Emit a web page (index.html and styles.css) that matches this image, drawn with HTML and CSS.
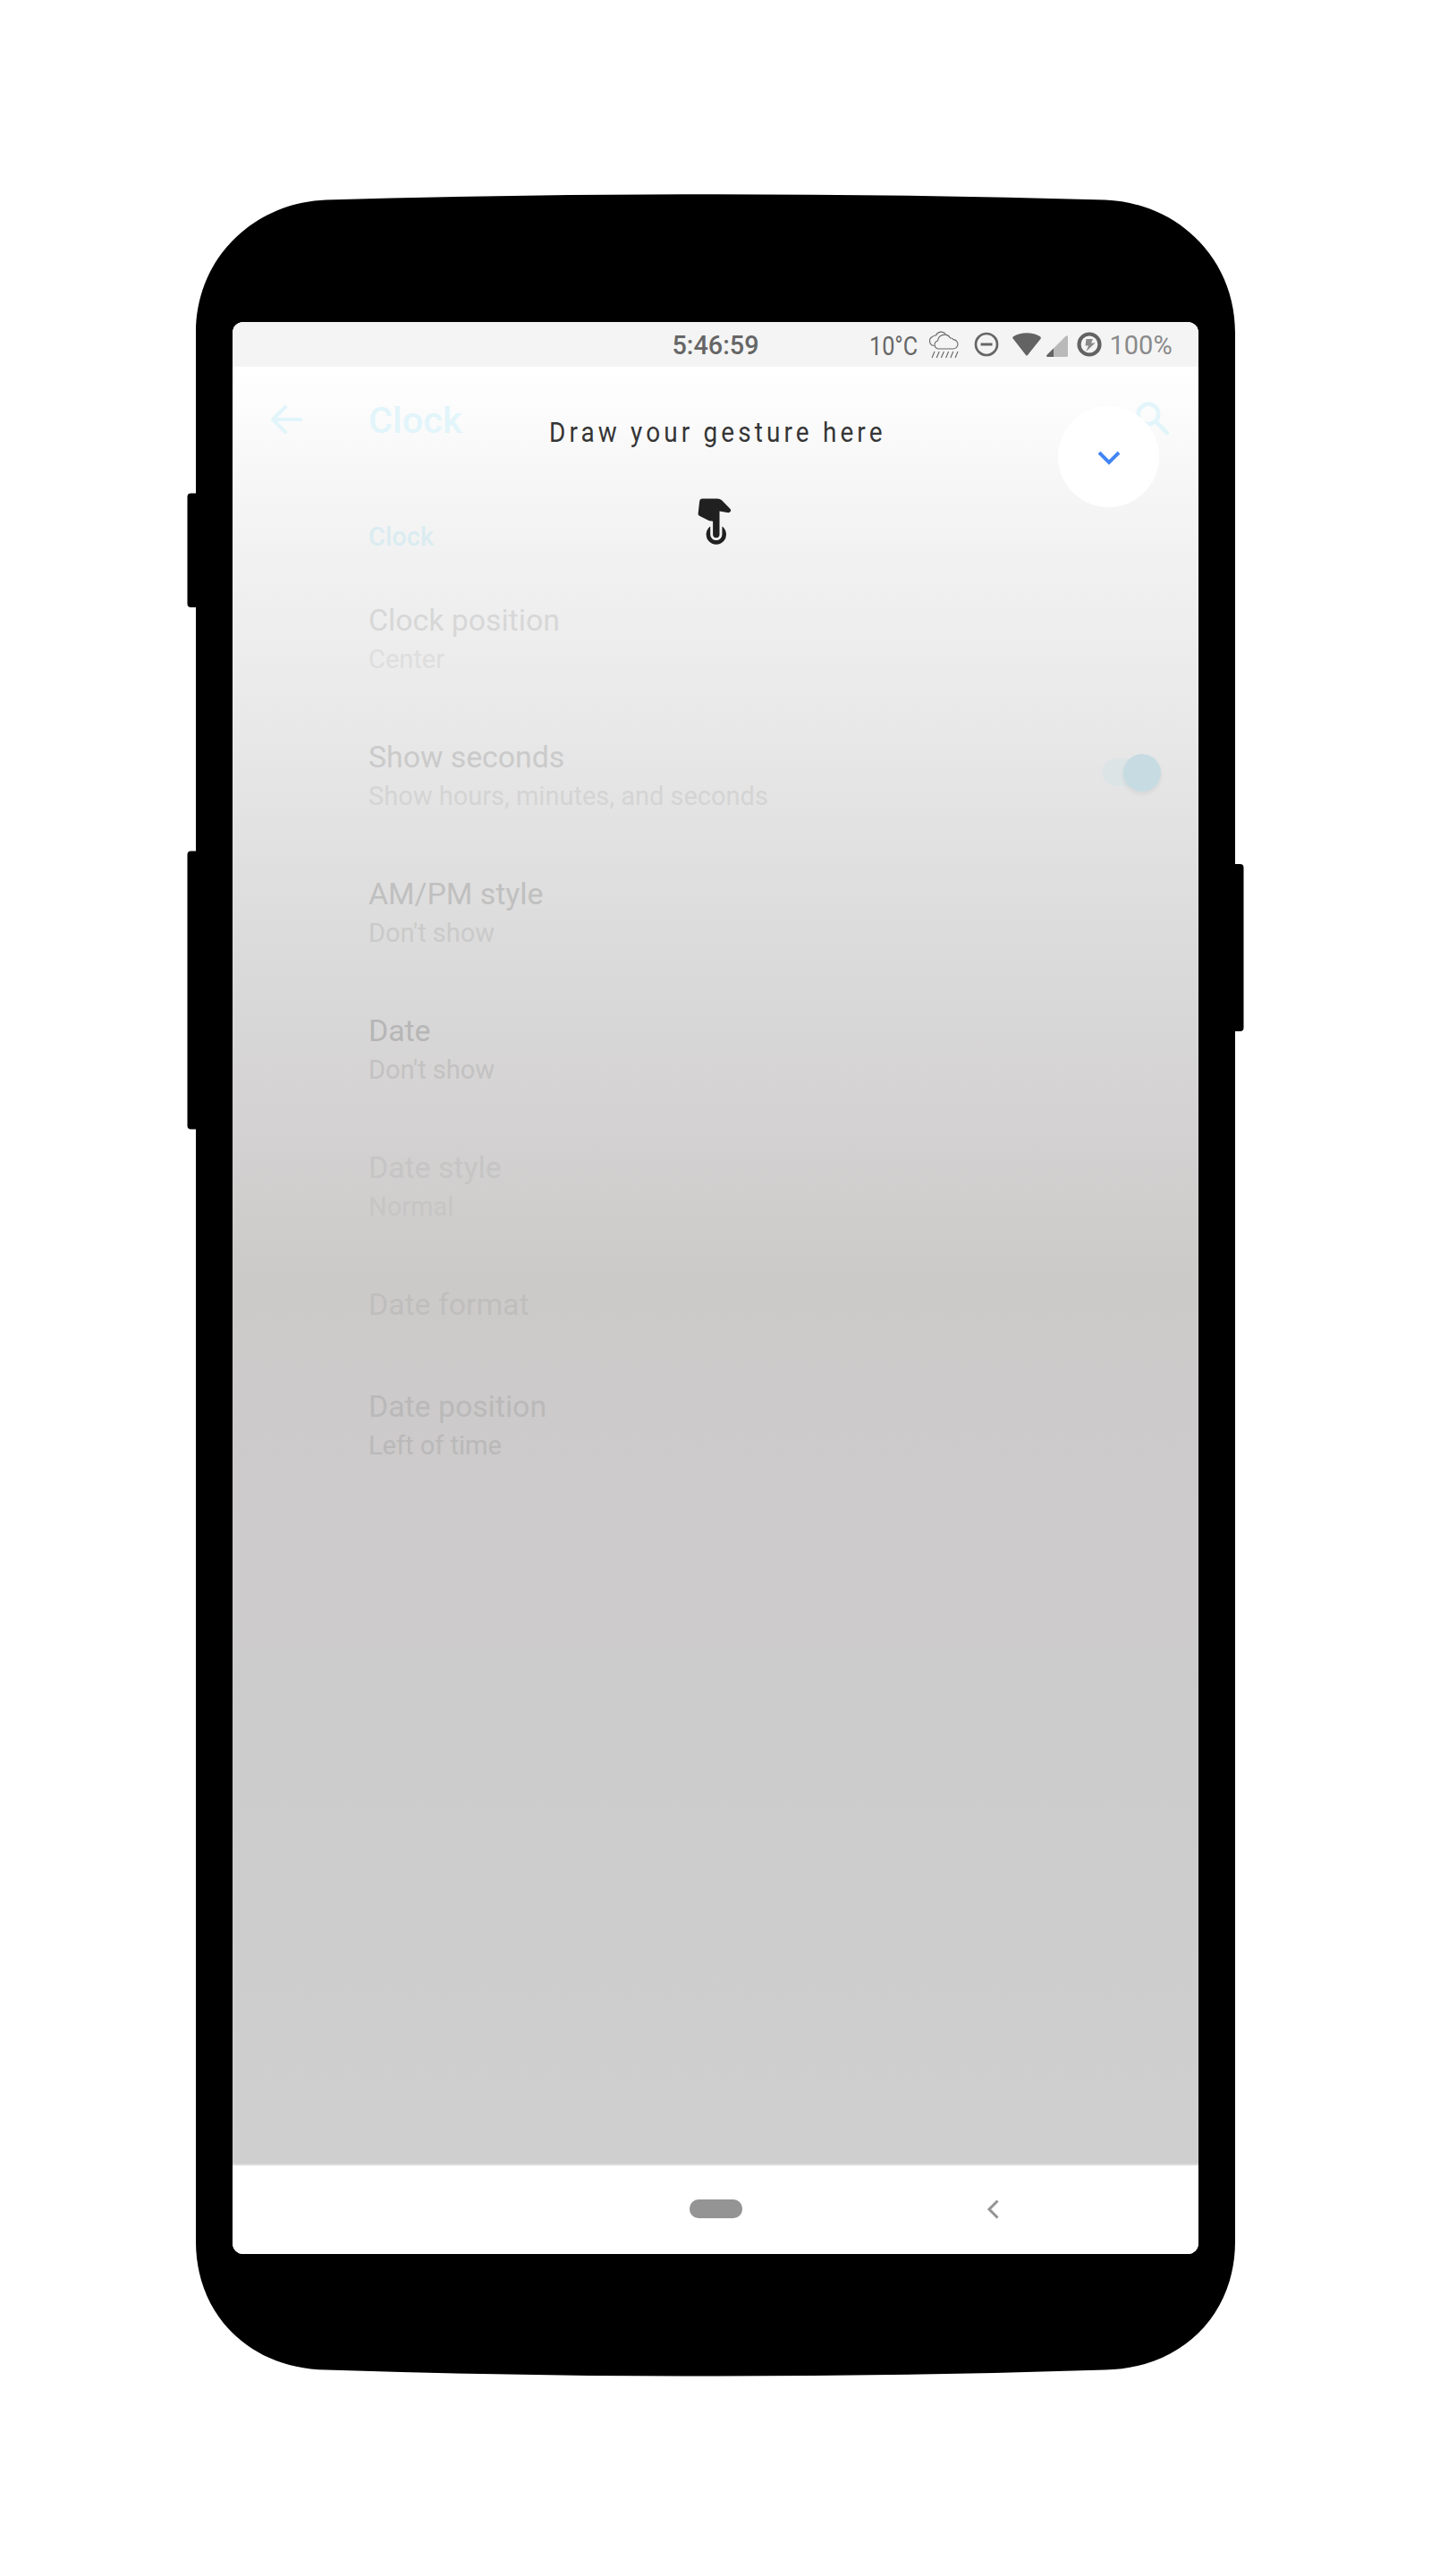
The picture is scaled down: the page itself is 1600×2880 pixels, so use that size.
FILE: index.html
```html
<!DOCTYPE html>
<html lang="en">
<head>
<meta charset="utf-8">
<title>Clock settings</title>
<link rel="stylesheet" href="styles.css">
</head>
<body>
<main class="phone">
  <svg class="phone-shell" viewBox="209 217 1182 2440" width="1182" height="2440" aria-hidden="true">
    <rect x="209.500" y="551.5" width="24" height="127.500" rx="4"/>
    <rect x="209.500" y="951.500" width="24" height="311" rx="4"/>
    <rect x="1367" y="966" width="23.500" height="187" rx="4"/>
    <path d="M219 372C219 289 283 227 364 223.500Q580 217.200 800 217.200T1236 223.500C1317 227 1381 289 1381 372V2506C1381 2589 1320 2648 1236 2649.500Q1020 2656.500 800 2656.500T364 2649.500C280 2648 219 2589 219 2506Z"/>
  </svg>
  <div class="screen">
    <header class="status-bar">
      <span class="status-spacer"></span>
      <span class="status-time">5:46:59</span>
      <div class="status-icons">
        <span class="temperature">10°C</span>
        <svg class="icon-weather" viewBox="0 0 34 32" width="34" height="32" fill="none" stroke="#666" stroke-width="1.100">
          <path d="M12 21H27.500A5.200 5.200 0 0 0 28 10.600A3.500 3.500 0 0 0 24.500 9A7.500 7.500 0 0 0 10.500 12A4.800 4.800 0 0 0 7 16.500A4.600 4.600 0 0 0 12 21Z"/>
          <path d="M6.500 17.500A5.200 5.200 0 0 1 4.500 7.600A4.500 4.500 0 0 1 8.500 6A6.500 6.500 0 0 1 19.500 4.500"/>
          <path d="M7 24L4 31M12.200 24L9.200 31M17.400 24L14.400 31M22.600 24L19.600 31M27.800 24L24.800 31M33 24L30 31"/>
        </svg>
        <svg class="icon-dnd" viewBox="0 0 28 28" width="28" height="28" fill="none" stroke="#666">
          <circle cx="14" cy="14" r="12" stroke-width="2.700"/><path d="M7.500 14H20.500" stroke-width="3"/>
        </svg>
        <svg class="icon-wifi" viewBox="0 0 32 26" width="32" height="26" fill="#636363">
          <path d="M.8 6.800C-.2 6 0 5 1 4.300C9-1 23-1 31 4.300C32 5 32.200 6 31.200 7.200L17 25C16.400 25.800 15.600 25.800 15 25Z"/>
        </svg>
        <svg class="icon-signal" viewBox="0 0 24 24" width="24" height="24">
          <path d="M1 24Q-.5 23.200.7 21.800L21.700.8Q23.500-.5 24 1.200V23L23 24Z" fill="#b9b9b9"/><path d="M1 24Q-.5 23.200.7 21.800L8 14.500V24Z" fill="#636363"/>
        </svg>
        <svg class="icon-battery" viewBox="0 0 28 28" width="28" height="28">
          <circle cx="14" cy="14" r="11.500" fill="none" stroke="#636363" stroke-width="4.200"/><path d="M10.500 8H18L16 12.500H20.500L10.300 22L13 15.500H9.500Z" fill="#8a8a8a"/>
        </svg>
        <span class="battery-level">100%</span>
      </div>
    </header>

    <section class="settings">
      <div class="app-bar">
        <svg class="icon-back" viewBox="0 0 36 34" width="36" height="34" fill="none" stroke="#e2f5fa" stroke-width="4.200" stroke-linecap="round"><path d="M34 17H3M17 3L3 17L17 31" stroke-linejoin="round"/></svg>
        <h1 class="app-title">Clock</h1>
        <svg class="icon-search" viewBox="0 0 40 40" width="40" height="40" fill="none" stroke="#e2f5fa" stroke-width="4.600" stroke-linecap="round"><circle cx="15" cy="15" r="11.200"/><path d="M25 25L36 36"/></svg>
      </div>
      <h2 class="section-title">Clock</h2>
      <ul class="options">
        <li class="option tone-1"><div><p class="option-title">Clock position</p><p class="option-value">Center</p></div></li>
        <li class="option tone-2"><div><p class="option-title">Show seconds</p><p class="option-value">Show hours, minutes, and seconds</p></div><span class="switch"><span class="switch-thumb"></span></span></li>
        <li class="option tone-3"><div><p class="option-title">AM/PM style</p><p class="option-value">Don't show</p></div></li>
        <li class="option tone-4"><div><p class="option-title">Date</p><p class="option-value">Don't show</p></div></li>
        <li class="option tone-5"><div><p class="option-title">Date style</p><p class="option-value">Normal</p></div></li>
        <li class="option tone-6"><div><p class="option-title">Date format</p></div></li>
        <li class="option tone-7"><div><p class="option-title">Date position</p><p class="option-value">Left of time</p></div></li>
      </ul>

      <p class="gesture-hint">Draw your gesture here</p>
      <svg class="gesture-hand" viewBox="0 0 38 53" width="38" height="53" fill="#202020">
        <path d="M5 .5H22Q25 .5 27 2.300L36.500 12Q38.500 15 34.500 16.300L24.500 14.500V40.500A3.700 3.700 0 0 1 17.100 40.500V25.800L13 25.200L2 19.800Q.4 18.800.6 17L2.200 3Q2.500.5 5 .5Z"/>
        <path d="M14.200 31.500V40.500A6.600 6.600 0 0 0 27.400 40.500V31.500A11.200 11.200 0 1 1 14.200 31.500Z"/>
      </svg>
      <button class="collapse" aria-label="Collapse"><svg viewBox="0 0 26 18" width="26" height="18" fill="none" stroke="#4285f4" stroke-width="4"><path d="M2 3L13 14L24 3"/></svg></button>
    </section>

    <nav class="nav-bar">
      <span class="nav-home"></span>
      <svg class="nav-back" viewBox="0 0 14 22" width="14" height="22" fill="none" stroke="#949494" stroke-width="3"><path d="M12.500 1.500L3 11L12.500 20.500"/></svg>
    </nav>
  </div>
</main>
</body>
</html>
```
FILE: styles.css
```css
* { box-sizing: border-box; margin: 0; padding: 0; }

body {
  width: 1600px;
  height: 2880px;
  background: #fff;
  font-family: Roboto, "Liberation Sans", sans-serif;
  overflow: hidden;
}

.phone {
  position: relative;
  width: 1182px;
  height: 2657px;
  margin: 0 auto;
  padding: 360px 51px 0;
}

.phone-shell { position: absolute; left: 0; top: 217px; }

.screen {
  position: relative;
  display: flex;
  flex-direction: column;
  width: 1080px;
  height: 2160px;
  border-radius: 12px;
  overflow: hidden;
  background: #fff;
}

.status-bar {
  display: grid;
  grid-template-columns: 1fr auto 1fr;
  align-items: center;
  height: 50px;
  background: #f4f4f4;
  color: #666;
  font-size: 29px;
}
.status-time { font-weight: 500; font-size: 28.8px; padding-top: 2px; }
.status-icons { display: flex; align-items: center; padding-left: 123px; white-space: nowrap; }
.temperature { width: 54px; font-size: 29px; transform: scaleX(.87); transform-origin: left; padding-top: 3px; }
.icon-weather { margin-left: 12px; }
.icon-dnd { margin-left: 17px; }
.icon-wifi { margin-left: 15px; }
.icon-signal { margin: 3px 0 0 6px; }
.icon-battery { margin-left: 10px; }
.battery-level { margin-left: 9px; padding-top: 2px; color: #8a8a8a; font-size: 29px; }
.status-icons svg { flex: none; }

.settings {
  position: relative;
  height: 2011px;
  background: linear-gradient(#fff 0, #fbfbfb 60px, #f6f6f6 130px, #f1f1f1 220px, #e9e9e9 390px, #e1e0e0 550px, #d9d8d8 710px, #d3d1d1 860px, #cecccb 980px, #cccac9 1030px, #cccbca 1080px, #cccaca 1130px, #cdcbcb 1350px, #cccccc 1600px, #cfcfcf 2000px);
  border-bottom: 2px solid #dcdcdc;
}

.app-bar { display: flex; align-items: center; height: 119px; padding: 0 31px 0 42px; }
.icon-back { margin-top: -1px; }
.app-title { flex: 1; margin-left: 74px; padding-top: 1px; color: #e2f5fa; font-size: 41.5px; font-weight: 500; line-height: 56px; }
.icon-search { margin-top: -3px; }
.section-title { padding: 52px 0 18px 152px; color: #daecf1; font-size: 29px; font-weight: 500; line-height: 38px; }

.options { list-style: none; }
.option { display: flex; justify-content: space-between; padding: 34px 42px 34px 152px; }
.option-title { font-size: 33.8px; line-height: 46px; }
.option-value { padding-top: 1px; font-size: 29px; line-height: 38px; }
.tone-1 .option-title { color: #d7d7d7; }
.tone-1 .option-value { color: #dedede; }
.tone-2 .option-title { color: #cacaca; }
.tone-2 .option-value { color: #d4d4d4; }
.tone-3 .option-title { color: #c0c0c0; }
.tone-3 .option-value { color: #cacaca; }
.tone-4 .option-title { color: #b6b6b6; }
.tone-4 .option-value { color: #c3c2c2; }
.tone-5 { color: #c6c5c5; }
.tone-6 { color: #bfbebd; }
.tone-7 { color: #bab9b9; }

.switch {
  display: flex;
  align-items: center;
  justify-content: flex-end;
  width: 66px;
  height: 31px;
  margin-top: 24px;
  border-radius: 16px;
  background: #dde4e6;
}
.switch-thumb { width: 42px; height: 42px; border-radius: 50%; background: #c6dce2; box-shadow: 0 3px 5px rgba(0, 0, 0, .06); }

.gesture-hint {
  position: absolute;
  left: 354px;
  top: 52px;
  color: #353535;
  font-size: 32px;
  line-height: 42px;
  letter-spacing: 4.8px;
  white-space: nowrap;
  transform: scaleX(.87);
  transform-origin: left;
}
.gesture-hand { position: absolute; left: 520px; top: 147px; }
.collapse {
  position: absolute;
  left: 923px;
  top: 44px;
  display: flex;
  align-items: center;
  justify-content: center;
  width: 113px;
  height: 113px;
  border: 0;
  border-radius: 50%;
  background: #fff;
}
.collapse svg { margin-top: 2px; }

.nav-bar { display: grid; grid-template-columns: 1fr 59px 1fr; align-items: center; height: 99px; padding-bottom: 2px; background: #fff; }
.nav-home { grid-column: 2; height: 21px; border-radius: 10px; background: #949494; }
.nav-back { margin-left: 273px; }
```
